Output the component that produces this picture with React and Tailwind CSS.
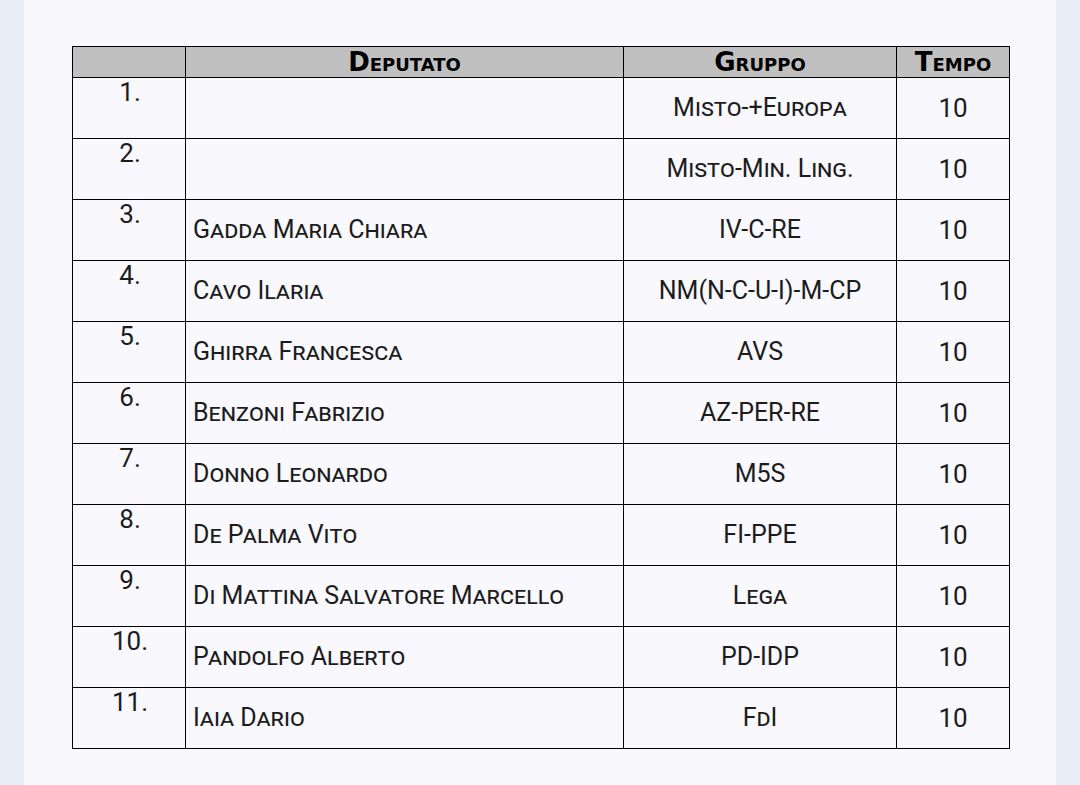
import React from "react";

const rows = [
  ["1.", "", "Misto-+Europa"],
  ["2.", "", "Misto-Min. Ling."],
  ["3.", "Gadda Maria Chiara", "IV-C-RE"],
  ["4.", "Cavo Ilaria", "NM(N-C-U-I)-M-CP"],
  ["5.", "Ghirra Francesca", "AVS"],
  ["6.", "Benzoni Fabrizio", "AZ-PER-RE"],
  ["7.", "Donno Leonardo", "M5S"],
  ["8.", "De Palma Vito", "FI-PPE"],
  ["9.", "Di Mattina Salvatore Marcello", "Lega"],
  ["10.", "Pandolfo Alberto", "PD-IDP"],
  ["11.", "Iaia Dario", "FdI"],
];

export default function App() {
  return (
    <div className="w-[1080px] h-[785px] bg-[#e9edf8] flex justify-center overflow-hidden">
      <div className="w-[1032px] h-full bg-[#f8f8fd] pt-[46px] pl-[48px]">
        <table
          className="table-fixed border-collapse text-[#1c1c1c] w-[937px]"
          style={{ fontFamily: "Roboto, 'Noto Sans', sans-serif" }}
        >
          <colgroup>
            <col className="w-[113px]" />
            <col className="w-[438px]" />
            <col className="w-[273px]" />
            <col className="w-[113px]" />
          </colgroup>
          <thead>
            <tr className="h-[31px] bg-[#c0c0c0]">
              <th className="border border-black p-0"></th>
              <th className="border border-black p-0 text-[26px] leading-none font-bold text-center [font-variant:small-caps] [font-family:'DejaVu_Sans',sans-serif] text-black">
                Deputato
              </th>
              <th className="border border-black p-0 text-[26px] leading-none font-bold text-center [font-variant:small-caps] [font-family:'DejaVu_Sans',sans-serif] text-black">
                Gruppo
              </th>
              <th className="border border-black p-0 text-[26px] leading-none font-bold text-center [font-variant:small-caps] [font-family:'DejaVu_Sans',sans-serif] text-black">
                Tempo
              </th>
            </tr>
          </thead>
          <tbody>
            {rows.map(([n, name, group]) => (
              <tr key={n} className="h-[61px]">
                <td className="border border-black p-0 pl-[2px] align-top text-center text-[26px] leading-none">
                  <div className="pt-[1px]">{n}</div>
                </td>
                <td className="border border-black p-0 pl-[7px] pb-[2px] align-middle text-[25px] leading-none font-normal [font-variant:small-caps]">
                  {name}
                </td>
                <td className="border border-black p-0 pb-[2px] align-middle text-center text-[25px] leading-none font-normal [font-variant:small-caps]">
                  {group}
                </td>
                <td className="border border-black p-0 pb-[1px] align-middle text-center text-[26px] leading-none">
                  10
                </td>
              </tr>
            ))}
          </tbody>
        </table>
      </div>
    </div>
  );
}
